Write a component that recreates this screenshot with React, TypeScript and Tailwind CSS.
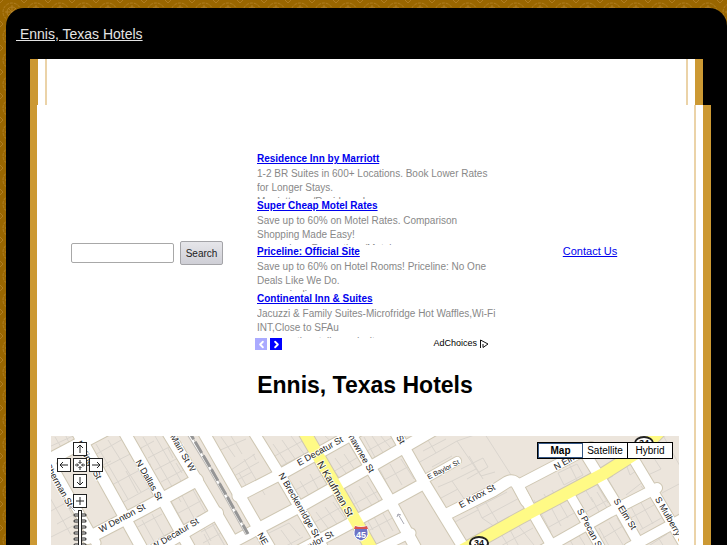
import { ChevronLeft, ChevronRight } from 'lucide-react';

interface Ad {
  title: string;
  text: string;
  site: string;
}

interface Road {
  d: string;
  w: number;
}

interface Label {
  x: number;
  y: number;
  angle: number;
  text: string;
  size?: number;
}

const ads: Ad[] = [
  { title: 'Residence Inn by Marriott', text: '1-2 BR Suites in 600+ Locations. Book Lower Rates for Longer Stays.', site: 'Marriott.com/ResidenceInn' },
  { title: 'Super Cheap Motel Rates', text: 'Save up to 60% on Motel Rates. Comparison Shopping Made Easy!', site: 'super.cheapResrvations/Motel' },
  { title: 'Priceline: Official Site', text: 'Save up to 60% on Hotel Rooms! Priceline: No One Deals Like We Do.', site: 'www.priceline.com' },
  { title: 'Continental Inn & Suites', text: 'Jacuzzi & Family Suites-Microfridge Hot Waffles,Wi-Fi INT,Close to SFAu', site: 'www.continentalinnandsuites.com' },
];

const roads: Road[] = [
  { d: 'M24 -8L89 109L106 140', w: 11 },
  { d: 'M-14 3L2 31L45 107', w: 9 },
  { d: 'M71 -8L112 64L153 138', w: 11 },
  { d: 'M114 -8L148 48L182 106', w: 11 },
  { d: 'M150 -8L199 78L235 140', w: 11 },
  { d: 'M200 -8L231 42L284 132', w: 10 },
  { d: 'M296 -8L339 65L380 140', w: 11 },
  { d: 'M342 -8L372 45L430 140', w: 11 },
  { d: 'M467 50L486 84L518 140', w: 10 },
  { d: 'M519 59L566 140', w: 9 },
  { d: 'M532 14L566 69L606 140', w: 10 },
  { d: 'M576 12L609 67L640 120', w: 10 },
  { d: 'M-10 28L62 -10', w: 12 },
  { d: 'M37 102L89 75L146 44', w: 12 },
  { d: 'M96 118L166 77', w: 12 },
  { d: 'M187 60L232 37L316 -10', w: 11 },
  { d: 'M182 106L252 69L319 31L390 -10', w: 11 },
  { d: 'M218 131L259 109L319 77L372 48', w: 11 },
  { d: 'M312 120L360 97', w: 9 },
  { d: 'M376 42L406 25', w: 8 },
  { d: 'M396 78L442 55L456 46Q463 42 467 50L475 65', w: 11 },
  { d: 'M467 49L540 11', w: 10 },
  { d: 'M490 115L559 76L606 52', w: 10 },
  { d: 'M578 112L640 78', w: 10 },
];

const highways: Road[] = [
  { d: 'M251 -8L310 94L336 140', w: 12 },
  { d: 'M390 126L469 82L552 38L590 14L614 -10', w: 12 },
];

// property lines inside the blocks
const parcels = [
  'M42 20L72 3M50 33L91 12M59 50L100 28M69 68L109 46M45 8L77 63M57 4L90 56M48 31L60 25M75 35L87 57',
  'M92 1L130 66M104 0L137 57M90 12L103 5M97 22L122 9M104 34L129 21M110 46L136 32M118 57L143 43M117 12L122 22M125 27L131 37',
  'M83 93L111 78M91 84L105 109M101 78L118 109M107 103L126 93M119 63L140 101M130 58L148 91M122 80L155 62M128 91L162 72M141 52L160 86',
  'M-2 60L20 99M6 51L32 98M0 75L18 65M6 88L24 78M0 101L30 86M4 1L13 16M14 -2L20 11M-2 11L22 0',
  'M170 1L184 21M180 0L191 18M167 15L195 3M188 37L195 49M180 34L204 18M183 40L208 26M186 44L201 36M193 23L214 59M202 18L205 24',
  'M222 8L239 32M231 4L247 27M240 0L256 22M250 5L266 18M222 21L255 3M228 31L268 11M274 0L284 9M276 13L300 1',
  'M240 51L252 69M249 45L262 66M259 38L271 60M268 34L280 56M239 57L275 37M247 67L283 47M277 26L292 47M284 22L300 44M293 18L308 40M301 13L314 33M282 36L314 17',
  'M256 80L267 96M265 76L277 92M274 71L288 91M282 66L295 84M261 88L297 67M289 62L306 91M299 56L314 83M308 50L324 74M316 46L331 70M294 73L329 54',
  'M313 1L325 23M321 0L335 21M329 -1L343 16M314 16L344 0M322 27L347 13M329 34L341 57M339 28L351 49M350 23L363 43M333 44L362 28',
  'M314 80L322 94M323 81L334 101M331 76L342 95M339 72L350 90M315 96L349 78M149 62L160 80M149 85L160 105M157 80L174 110M150 96L170 85',
  'M153 98L168 126M163 91L182 124M152 107L179 92M216 98L238 87L249 100M230 94L241 109M235 110L252 101',
  'M375 1L385 17L367 27M385 17L406 5L438 -6M406 5L430 40L444 36M418 20L432 43M410 33L432 22L437 31L416 43M387 51L401 45L414 64M401 45L425 33M378 45L388 61M390 62L407 53',
  'M430 -8L462 42M372 15L395 3M381 31L401 20M425 72L456 56M434 65L448 88M426 71L431 82L474 59M431 82L447 93M400 88L427 74M466 88L483 109M458 92L472 118M450 98L465 122M448 111L482 92',
  'M507 37L526 28L532 39L513 49ZM518 28L532 56M529 45L542 66M540 39L554 61M532 56L562 40M546 49L557 67M557 43L568 62M572 20L579 39L591 31L593 45L575 59M590 50L599 61',
  'M483 64L500 96M493 58L510 90M501 54L517 82M489 78L518 62M498 91L525 76M530 68L540 87M540 61L551 81M546 56L558 75M535 76L564 60M501 106L528 90M516 99L529 121M524 93L540 119',
  'M572 73L586 98M579 69L592 93M588 63L602 88M578 83L603 69M589 94L614 80M548 92L562 117M558 86L574 112M566 82L583 110M552 102L580 85M597 39L610 33L601 19M611 57L630 47M608 -8L630 32M593 113L616 98M607 101L621 124',
];

const labels: Label[] = [
  { x: 8, y: 49, angle: 61, text: 'Sherman St' },
  { x: 38, y: 24, angle: 61, text: 'N Kings St' },
  { x: 98, y: 44, angle: 60, text: 'N Dallas St' },
  { x: 132, y: 17, angle: 60, text: 'Main St W' },
  { x: 71, y: 82, angle: -28, text: 'W Denton St' },
  { x: 124, y: 98, angle: -31, text: 'W Decatur St' },
  { x: 269, y: 15, angle: -29, text: 'E Decatur St' },
  { x: 248, y: 69, angle: 60, text: 'N Breckenridge St' },
  { x: 284, y: 53, angle: 60, text: 'N Kaufman St', size: 10 },
  { x: 309, y: 15, angle: 60, text: 'Shawnee St' },
  { x: 220, y: 117, angle: 60, text: 'NE Main St' },
  { x: 262, y: 108, angle: -29, text: 'E Baylor St' },
  { x: 392, y: 33, angle: -27, text: 'E Baylor St', size: 7 },
  { x: 426, y: 60, angle: -29, text: 'E Knox St' },
  { x: 519, y: 23, angle: -29, text: 'N Elm St' },
  { x: 539, y: 93, angle: 62, text: 'S Pecan St' },
  { x: 574, y: 78, angle: 58, text: 'S Elm St' },
  { x: 620, y: 85, angle: 60, text: 'S Mulberry St' },
  { x: 339, y: -15, angle: 60, text: 'N Preston St' },
];

const panButtons = [
  { name: 'Pan up', place: 'left-[22px] top-[6px]', icon: 'M7 11V3M4 6L7 3L10 6' },
  { name: 'Pan left', place: 'left-[6px] top-[22px]', icon: 'M11 7H3M6 4L3 7L6 10' },
  { name: 'Center', place: 'left-[22px] top-[22px]', icon: 'M7 2V5M5.500 4L7 5.500L8.500 4M7 12V9M5.500 10L7 8.500L8.500 10M2 7H5M4 5.500L5.500 7L4 8.500M12 7H9M10 5.500L8.500 7L10 8.500' },
  { name: 'Pan right', place: 'left-[38px] top-[22px]', icon: 'M3 7H11M8 4L11 7L8 10' },
  { name: 'Pan down', place: 'left-[22px] top-[38px]', icon: 'M7 3V11M4 8L7 11L10 8' },
  { name: 'Zoom in', place: 'left-[22px] top-[58px]', icon: 'M7 3V11M3 7H11' },
];

function PageBackdrop() {
  return (
    <svg className="absolute inset-0 h-full w-full" aria-hidden="true">
      <defs>
        <pattern id="damask" width="24" height="24" patternUnits="userSpaceOnUse">
          <rect width="24" height="24" fill="#996600" />
          <g fill="none" stroke="#b8862d" strokeOpacity="0.7">
            <circle cx="12" cy="12" r="9" strokeDasharray="3 1" />
            <circle cx="12" cy="12" r="5" />
            <path d="M12 5V19M5 12H19M8 8L16 16M16 8L8 16" />
            <path d="M-3 0L0 -3L3 0L0 3ZM21 0L24 -3L27 0L24 3ZM-3 24L0 21L3 24M21 24L24 21L27 24" />
          </g>
        </pattern>
      </defs>
      <rect width="100%" height="100%" fill="url(#damask)" />
    </svg>
  );
}

function StreetMap() {
  return (
    <svg className="absolute inset-0 h-full w-full" role="img" aria-label="Map of Ennis, Texas" fontFamily='"Liberation Sans", Arial, sans-serif'>
      <rect width="100%" height="100%" fill="#ece5dc" />
      <g fill="none" stroke="#dad5ce">
        {parcels.map((d) => <path key={d} d={d} />)}
      </g>
      <g fill="none" stroke="#cfc7b3" strokeLinecap="round">
        {[...roads, ...highways].map((r) => <path key={r.d} d={r.d} strokeWidth={r.w + 2} />)}
      </g>
      <g fill="none" stroke="#ffffff" strokeLinecap="round">
        {roads.map((r) => <path key={r.d} d={r.d} strokeWidth={r.w} />)}
      </g>
      <g fill="none" stroke="#fffa85">
        {highways.map((r) => <path key={r.d} d={r.d} strokeWidth={r.w} />)}
      </g>
      <path d="M134 -8L158 31L177 64L196 98" fill="none" stroke="#bdbab5" strokeWidth="4" />
      <path d="M134 -8L158 31L177 64L196 98" fill="none" stroke="#ffffff" strokeWidth="2" />
      <path d="M136 -8L159 31L178 64L197 98" fill="none" stroke="#969696" strokeWidth="3" strokeDasharray="13 3" />
      <path d="M353 88L347 78M346 81L347 78L350 79M24 75L19 70M19 73V70H22" fill="none" stroke="#aaaab4" />
      <g fill="#222222" stroke="#ffffff" strokeWidth="2" strokeOpacity="0.8" paintOrder="stroke" textAnchor="middle">
        {labels.map((l) => (
          <text key={`${l.text}${l.x}`} fontSize={l.size ?? 9} transform={`translate(${l.x} ${l.y}) rotate(${l.angle})`} dy="3">{l.text}</text>
        ))}
      </g>
      <path d="M304 90Q310 92 316 90L317 96Q318 102 310 105Q302 102 303 96Z" fill="#6c73c4" stroke="#ffffff" />
      <path d="M304 90Q310 92 316 90L317 93H303Z" fill="#d9534f" />
      <text x="310" y="102" fontSize="9" fontWeight="bold" fill="#ffffff" textAnchor="middle">45</text>
      {[{ x: 428, y: 107 }, { x: 593, y: 7 }].map((s) => (
        <g key={s.x}>
          <ellipse cx={s.x} cy={s.y} rx="9" ry="6" fill="#ffffff" stroke="#222222" strokeWidth="2" />
          <text x={s.x} y={s.y + 3} fontSize="9" fontWeight="bold" fill="#111111" textAnchor="middle">34</text>
        </g>
      ))}
    </svg>
  );
}

function MapControls() {
  return (
    <>
      {panButtons.map((b) => (
        <button key={b.name} type="button" aria-label={b.name} className={`absolute ${b.place} h-[14px] w-[14px] bg-white`}>
          <svg width="14" height="14" viewBox="0 0 14 14" fill="none" stroke="#222222">
            <rect x="0.500" y="0.500" width="13" height="13" />
            <path d={b.icon} />
          </svg>
        </button>
      ))}
      <svg className="absolute left-[22px] top-[74px]" width="14" height="120" fill="none" stroke="#222222" strokeLinecap="round" aria-hidden="true">
        <path d="M2 5H12M2 11H12M2 17H12M2 23H12M2 29H12M2 35H12" strokeWidth="3" />
        <path d="M2 5H12M2 11H12M2 17H12M2 23H12M2 29H12M2 35H12" stroke="#ffffff" />
        <rect x="5.500" y="0.500" width="3" height="119" fill="#ffffff" />
      </svg>
      <div className="absolute right-[6px] top-[6px] flex border border-black bg-white text-[10px] leading-[15px] text-black">
        <button type="button" className="w-[45px] border border-[#345684] font-bold leading-[13px]">Map</button>
        <button type="button" className="w-[45px] border-r border-black">Satellite</button>
        <button type="button" className="w-[44px]">Hybrid</button>
      </div>
    </>
  );
}

export default function App() {
  return (
    <div className="relative flex min-h-screen flex-col overflow-hidden pl-[6px] pt-2 font-['Liberation_Sans',Arial,sans-serif]">
      <PageBackdrop />
      <div className="relative flex flex-1 flex-col rounded-t-[18px] bg-black pl-6">
        <header className="-ml-[14px] h-[51px] pt-[14px]">
          <a href="#" className="whitespace-pre text-[14px] leading-5 text-[#e4e4e4] underline"> Ennis, Texas Hotels</a>
        </header>

        <div className="mr-6 flex h-[46px] border-x-8 border-[#cc9933] bg-white px-[7px]">
          <div className="flex-1 border-x-2 border-[#ebd3a8]" />
        </div>

        <main className="mr-4 flex flex-1 border-r-8 border-l-[7px] border-[#cc9933] bg-white pr-[7px]">
          <div className="flex flex-1 flex-col border-r-2 border-[#ebd3a8] pl-[14px] pr-[15px]">
            <div className="flex pt-[47px]">
              <form className="flex w-[206px] items-center gap-[6px] pl-5 pt-1">
                <input type="text" aria-label="Search" className="h-5 w-[103px] rounded-xs border border-[#a8a8a8] px-1 text-xs" />
                <button type="submit" className="h-6 w-[43px] rounded-xs border border-[#a4a4a8] bg-linear-to-b from-[#e6e6ea] to-[#cfcfd6] text-[10px] text-[#222222]">Search</button>
              </form>

              <section className="w-[244px]">
                <div className="grid h-[186px] grid-rows-4">
                  {ads.map((ad) => (
                    <article key={ad.title} className="overflow-hidden text-[10px] leading-[14px] text-[#888888]">
                      <a href="#" className="block font-bold text-[#0000ee] underline">{ad.title}</a>
                      <p className="pt-px">{ad.text}</p>
                      <p>{ad.site}</p>
                    </article>
                  ))}
                </div>
                <div className="-ml-[2px] mr-3 flex h-3 items-center gap-[3px]">
                  <button type="button" aria-label="Previous ads" className="flex h-3 w-3 items-center justify-center bg-[#aaaaff] text-white"><ChevronLeft size={11} strokeWidth={4} /></button>
                  <button type="button" aria-label="Next ads" className="flex h-3 w-3 items-center justify-center bg-[#0000ff] text-white"><ChevronRight size={11} strokeWidth={4} /></button>
                  <a href="#" className="ml-auto flex items-center gap-[2px] text-[9px] text-black">
                    AdChoices
                    <svg width="10" height="10" viewBox="0 0 10 10" fill="none" stroke="#111111"><path d="M1.500 9V1L9 5L4 8.500V5" /></svg>
                  </a>
                </div>
              </section>

              <div className="flex flex-1 items-center justify-center">
                <a href="#" className="text-[11px] text-[#0000ee] underline">Contact Us</a>
              </div>
            </div>

            <h1 className="py-5 text-center text-[23px] font-bold leading-[30px] text-black">Ennis, Texas Hotels</h1>

            <div className="relative mt-4 min-h-[109px] flex-1 overflow-hidden">
              <StreetMap />
              <MapControls />
            </div>
          </div>
        </main>
      </div>
    </div>
  );
}
